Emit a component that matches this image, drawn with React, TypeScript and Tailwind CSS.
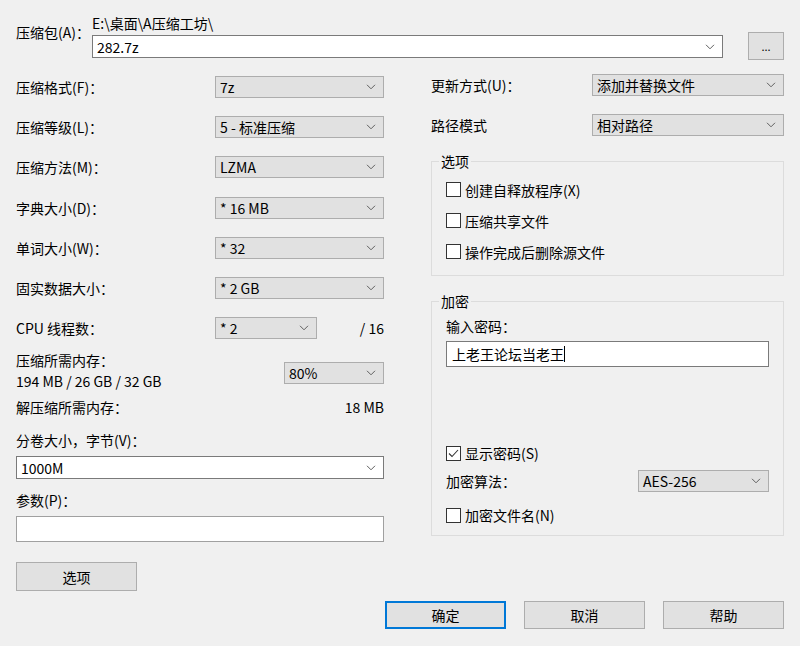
import React from "react";

const Chevron = () => (
  <svg width="10" height="6" viewBox="0 0 10 6" className="shrink-0">
    <polyline points="1,0.8 5,4.8 9,0.8" fill="none" stroke="#606060" strokeWidth="1" />
  </svg>
);

function Combo({ value, className, white }: { value: string; className: string; white?: boolean }) {
  return (
    <div
      className={
        "flex items-center justify-between border pl-[4px] pr-[7px] leading-[18px] " +
        (white ? "bg-white border-[#7a7a7a] " : "bg-[#e1e1e1] border-[#adadad] ") +
        className
      }
    >
      <span>{value}</span>
      <Chevron />
    </div>
  );
}

function Check({ label, checked }: { label: string; checked?: boolean }) {
  return (
    <div className="flex items-center gap-[4px]">
      <span className="w-[15px] h-[15px] border border-[#333333] bg-white flex items-center justify-center">
        {checked && (
          <svg width="13" height="13" viewBox="0 0 13 13">
            <polyline points="2,6.5 5,9.5 11,3" fill="none" stroke="#333333" strokeWidth="1.1" />
          </svg>
        )}
      </span>
      <span>{label}</span>
    </div>
  );
}

function Row({ label, children, h }: { label: string; children: React.ReactNode; h: string }) {
  return (
    <div className={"flex items-center justify-between " + h}>
      <span>{label}</span>
      {children}
    </div>
  );
}

function Btn({ label, className, primary }: { label: string; className: string; primary?: boolean }) {
  return (
    <div
      className={
        "flex items-center justify-center bg-[#e1e1e1] " +
        (primary ? "border-2 border-[#0078d7] " : "border border-[#adadad] ") +
        className
      }
    >
      {label}
    </div>
  );
}

export default function App() {
  return (
    <div
      className="w-[800px] h-[646px] bg-[#f0f0f0] text-[#000000] text-[14px] leading-[18px] px-[16px] pt-[14px] overflow-hidden"
      style={{ fontFamily: '"Noto Sans CJK SC", "Noto Sans", sans-serif' }}
    >
      {/* archive row */}
      <div className="flex items-start w-[768px]">
        <div className="w-[76px] mt-[9px]">压缩包(A)：</div>
        <div className="flex flex-col w-[631px]">
          <div className="h-[21px] leading-[18px]">E:\桌面\A压缩工坊\</div>
          <Combo value="282.7z" white className="h-[23px] w-[631px]" />
        </div>
        <Btn label="..." className="ml-[25px] mt-[18px] w-[36px] h-[28px] text-[11px]" />
      </div>

      <div className="flex gap-[47px] w-[768px]">
        {/* left column */}
        <div className="w-[368px] flex flex-col pt-[7px]">
          <Row label="压缩格式(F)：" h="h-[40px]">
            <Combo value="7z" className="h-[22px] w-[169px]" />
          </Row>
          <Row label="压缩等级(L)：" h="h-[40px]">
            <Combo value="5 - 标准压缩" className="h-[22px] w-[169px]" />
          </Row>
          <Row label="压缩方法(M)：" h="h-[40px]">
            <Combo value="LZMA" className="h-[22px] w-[169px]" />
          </Row>
          <Row label="字典大小(D)：" h="h-[41px]">
            <Combo value="* 16 MB" className="h-[22px] w-[169px]" />
          </Row>
          <Row label="单词大小(W)：" h="h-[40px]">
            <Combo value="* 32" className="h-[22px] w-[169px]" />
          </Row>
          <Row label="固实数据大小：" h="h-[40px]">
            <Combo value="* 2 GB" className="h-[22px] w-[169px]" />
          </Row>
          <div className="flex items-center h-[40px]">
            <span className="w-[199px]">CPU 线程数：</span>
            <Combo value="* 2" className="h-[22px] w-[102px]" />
            <span className="ml-auto">/ 16</span>
          </div>
          <div className="flex items-start justify-between mt-[2px]">
            <div className="flex flex-col leading-[21px]">
              <span>压缩所需内存：</span>
              <span>194 MB / 26 GB / 32 GB</span>
            </div>
            <Combo value="80%" className="mt-[12px] h-[22px] w-[100px]" />
          </div>
          <div className="flex justify-between leading-[21px] mt-[5px]">
            <span>解压缩所需内存：</span>
            <span>18 MB</span>
          </div>
          <div className="leading-[21px] mt-[12px]">分卷大小，字节(V)：</div>
          <Combo value="1000M" white className="mt-[5px] h-[23px] w-[368px]" />
          <div className="leading-[21px] mt-[11px]">参数(P)：</div>
          <div className="mt-[5px] h-[26px] w-[368px] bg-white border border-[#a0a0a0]" />
          <Btn label="选项" className="mt-[20px] w-[121px] h-[29px]" />
        </div>

        {/* right column */}
        <div className="w-[353px] flex flex-col pt-[5px]">
          <Row label="更新方式(U)：" h="h-[40px]">
            <Combo value="添加并替换文件" className="h-[22px] w-[192px]" />
          </Row>
          <Row label="路径模式" h="h-[39px]">
            <Combo value="相对路径" className="h-[22px] w-[192px]" />
          </Row>

          <fieldset className="mt-[8px] border border-[#dcdcdc] pl-[14px] pr-[14px] pb-[8px]">
            <legend className="ml-[-7px] px-[2px] leading-[18px]">选项</legend>
            <div className="flex flex-col pt-[4px]">
              <div className="h-[31px] flex items-center">
                <Check label="创建自释放程序(X)" />
              </div>
              <div className="h-[31px] flex items-center">
                <Check label="压缩共享文件" />
              </div>
              <div className="h-[31px] flex items-center">
                <Check label="操作完成后删除源文件" />
              </div>
            </div>
          </fieldset>

          <fieldset className="mt-[16px] border border-[#dcdcdc] pl-[14px] pr-[14px] pb-[6px]">
            <legend className="ml-[-7px] px-[2px] leading-[18px]">加密</legend>
            <div className="flex flex-col">
              <div className="leading-[21px] mt-[6px]">输入密码：</div>
              <div className="mt-[4px] h-[26px] w-full bg-white border border-[#7a7a7a] flex items-center pl-[5px]">
                <span>上老王论坛当老王</span>
                <span className="w-[1px] h-[16px] bg-black" />
              </div>
              <div className="mt-[72px] h-[28px] flex items-center">
                <Check label="显示密码(S)" checked />
              </div>
              <div className="h-[28px] flex items-center justify-between">
                <span>加密算法：</span>
                <Combo value="AES-256" className="h-[22px] w-[131px]" />
              </div>
              <div className="mt-[6px] h-[28px] flex items-center">
                <Check label="加密文件名(N)" />
              </div>
            </div>
          </fieldset>
        </div>
      </div>

      <div className="flex justify-end gap-[18px] w-[768px] mt-[10px]">
        <Btn label="确定" primary className="w-[121px] h-[28px]" />
        <Btn label="取消" className="w-[121px] h-[28px]" />
        <Btn label="帮助" className="w-[121px] h-[28px]" />
      </div>
    </div>
  );
}
